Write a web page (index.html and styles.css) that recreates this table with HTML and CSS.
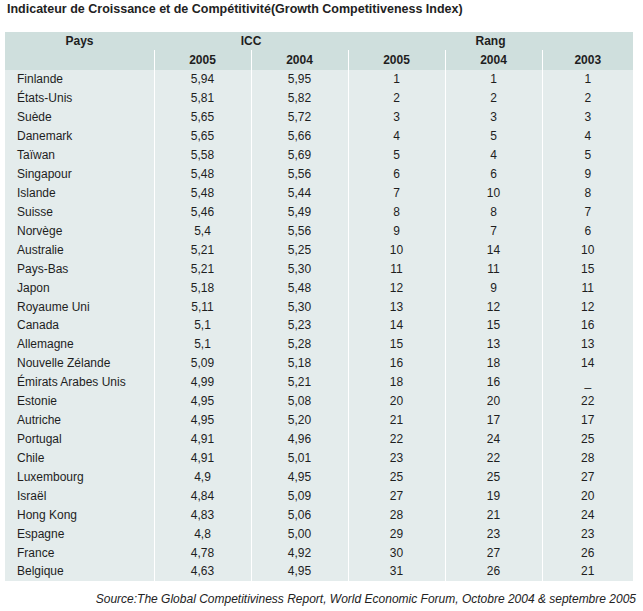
FILE: index.html
```html
<!DOCTYPE html>
<html lang="fr">
<head>
<meta charset="utf-8">
<title>Indicateur de Croissance et de Compétitivité</title>
<link rel="stylesheet" href="styles.css">
</head>
<body>
<div class="page">
  <h1 class="title">Indicateur de Croissance et de Compétitivité(Growth Competitiveness Index)</h1>
  <table class="grid">
    <colgroup>
      <col class="c-pays">
      <col class="c-num">
      <col class="c-num">
      <col class="c-num">
      <col class="c-num">
      <col class="c-last">
    </colgroup>
    <thead>
      <tr class="h1">
        <th>Pays</th>
        <th colspan="2">ICC</th>
        <th colspan="3">Rang</th>
      </tr>
      <tr class="h2">
        <th></th>
        <th>2005</th><th>2004</th><th>2005</th><th>2004</th><th>2003</th>
      </tr>
    </thead>
    <tbody>
      <tr><td>Finlande</td><td>5,94</td><td>5,95</td><td>1</td><td>1</td><td>1</td></tr>
      <tr><td>États-Unis</td><td>5,81</td><td>5,82</td><td>2</td><td>2</td><td>2</td></tr>
      <tr><td>Suède</td><td>5,65</td><td>5,72</td><td>3</td><td>3</td><td>3</td></tr>
      <tr><td>Danemark</td><td>5,65</td><td>5,66</td><td>4</td><td>5</td><td>4</td></tr>
      <tr><td>Taïwan</td><td>5,58</td><td>5,69</td><td>5</td><td>4</td><td>5</td></tr>
      <tr><td>Singapour</td><td>5,48</td><td>5,56</td><td>6</td><td>6</td><td>9</td></tr>
      <tr><td>Islande</td><td>5,48</td><td>5,44</td><td>7</td><td>10</td><td>8</td></tr>
      <tr><td>Suisse</td><td>5,46</td><td>5,49</td><td>8</td><td>8</td><td>7</td></tr>
      <tr><td>Norvège</td><td>5,4</td><td>5,56</td><td>9</td><td>7</td><td>6</td></tr>
      <tr><td>Australie</td><td>5,21</td><td>5,25</td><td>10</td><td>14</td><td>10</td></tr>
      <tr><td>Pays-Bas</td><td>5,21</td><td>5,30</td><td>11</td><td>11</td><td>15</td></tr>
      <tr><td>Japon</td><td>5,18</td><td>5,48</td><td>12</td><td>9</td><td>11</td></tr>
      <tr><td>Royaume Uni</td><td>5,11</td><td>5,30</td><td>13</td><td>12</td><td>12</td></tr>
      <tr><td>Canada</td><td>5,1</td><td>5,23</td><td>14</td><td>15</td><td>16</td></tr>
      <tr><td>Allemagne</td><td>5,1</td><td>5,28</td><td>15</td><td>13</td><td>13</td></tr>
      <tr><td>Nouvelle Zélande</td><td>5,09</td><td>5,18</td><td>16</td><td>18</td><td>14</td></tr>
      <tr><td>Émirats Arabes Unis</td><td>4,99</td><td>5,21</td><td>18</td><td>16</td><td class="dash">_</td></tr>
      <tr><td>Estonie</td><td>4,95</td><td>5,08</td><td>20</td><td>20</td><td>22</td></tr>
      <tr><td>Autriche</td><td>4,95</td><td>5,20</td><td>21</td><td>17</td><td>17</td></tr>
      <tr><td>Portugal</td><td>4,91</td><td>4,96</td><td>22</td><td>24</td><td>25</td></tr>
      <tr><td>Chile</td><td>4,91</td><td>5,01</td><td>23</td><td>22</td><td>28</td></tr>
      <tr><td>Luxembourg</td><td>4,9</td><td>4,95</td><td>25</td><td>25</td><td>27</td></tr>
      <tr><td>Israël</td><td>4,84</td><td>5,09</td><td>27</td><td>19</td><td>20</td></tr>
      <tr><td>Hong Kong</td><td>4,83</td><td>5,06</td><td>28</td><td>21</td><td>24</td></tr>
      <tr><td>Espagne</td><td>4,8</td><td>5,00</td><td>29</td><td>23</td><td>23</td></tr>
      <tr><td>France</td><td>4,78</td><td>4,92</td><td>30</td><td>27</td><td>26</td></tr>
      <tr><td>Belgique</td><td>4,63</td><td>4,95</td><td>31</td><td>26</td><td>21</td></tr>
    </tbody>
  </table>
  <p class="source">Source:The Global Competitiviness Report, World Economic Forum, Octobre 2004 &amp; septembre 2005</p>
</div>
</body>
</html>
```

FILE: styles.css
```css
html, body {
  margin: 0;
  padding: 0;
  background: #ffffff;
}

.page {
  width: 643px;
  padding: 0 0 0 5px;
  box-sizing: border-box;
  font-family: "Liberation Sans", Arial, sans-serif;
  color: #1e1e1e;
}

.title {
  margin: 0;
  padding: 1px 0 0 2px;
  height: 32px;
  box-sizing: border-box;
  font-size: 12.5px;
  line-height: 16px;
  font-weight: bold;
  color: #222;
}

.grid {
  width: 628px;
  border-collapse: collapse;
  table-layout: fixed;
  font-size: 12px;
}

.c-pays { width: 149px; }
.c-num { width: 97px; }
.c-last { width: 91px; }

.grid th,
.grid td {
  padding: 0;
  text-align: center;
  white-space: nowrap;
  overflow: hidden;
}

.grid thead th {
  background: #cfdfdd;
  font-weight: bold;
}

.grid .h1 th {
  height: 18px;
  line-height: 18px;
}

.grid .h2 th {
  height: 20px;
  line-height: 20px;
  border-left: 1px solid #ffffff;
}

.grid .h2 th:first-child {
  border-left: none;
}

.grid tbody td {
  height: 18.93px;
  line-height: 18px;
  background: #e4ecec;
  border-left: 1px solid #ffffff;
}

.grid tbody td:first-child {
  text-align: left;
  padding-left: 12px;
  border-left: none;
}

.source {
  margin: 0;
  padding: 11px 7px 0 0;
  text-align: right;
  font-size: 12px;
  font-style: italic;
  color: #222;
}
```
